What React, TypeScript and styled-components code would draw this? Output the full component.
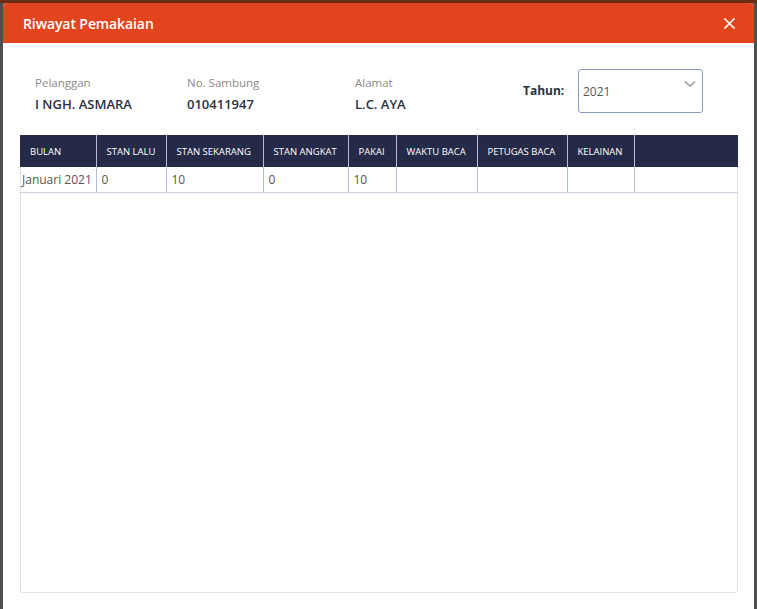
import React from "react";
import styled, { createGlobalStyle } from "styled-components";

const Global = createGlobalStyle`
  html, body { margin: 0; padding: 0; }
  body {
    background: linear-gradient(to bottom, #6b2c18 0, #6b2c18 3px, #4f4f4f 3px);
    font-family: "Open Sans", "Noto Sans", sans-serif;
    height: 609px;
    overflow: hidden;
  }
`;

const Overlay = styled.div`
  padding: 3px 3px 0 3px;
  height: 615px;
  box-sizing: border-box;
`;

const Modal = styled.div`
  background: #ffffff;
  border-radius: 4px 4px 0 0;
  height: 100%;
  display: flex;
  flex-direction: column;
  overflow: hidden;
`;

const Header = styled.div`
  height: 40px;
  background: #e2451e;
  display: flex;
  align-items: center;
  justify-content: space-between;
  padding: 0 17px 0 20px;
  flex-shrink: 0;
`;

const Title = styled.h1`
  margin: 0;
  color: #ffffff;
  font-size: 14px;
  font-weight: 600;
  letter-spacing: -0.1px;
`;

const Close = styled.button`
  background: none;
  border: none;
  padding: 0;
  width: 16px;
  height: 16px;
  display: flex;
  align-items: center;
  justify-content: center;
  cursor: pointer;
`;

const Body = styled.div`
  flex: 1;
  display: flex;
  flex-direction: column;
  padding: 26px 16px 22px 17px;
  min-height: 0;
`;

const InfoRow = styled.div`
  display: flex;
  align-items: flex-start;
  padding-left: 15px;
  height: 44px;
`;

const Field = styled.div<{ $w: number }>`
  width: ${(p) => p.$w}px;
  display: flex;
  flex-direction: column;
  padding-top: 5px;
`;

const Label = styled.span`
  font-size: 11.5px;
  color: #8a8a8a;
  line-height: 17px;
`;

const Value = styled.span`
  font-size: 13px;
  color: #2b3044;
  font-weight: 600;
  line-height: 19px;
  margin-top: 4px;
`;

const YearGroup = styled.div`
  display: flex;
  align-items: flex-start;
`;

const YearLabel = styled.span`
  font-size: 12px;
  font-weight: 700;
  color: #2b3044;
  width: 55px;
  margin-top: 13px;
`;

const Select = styled.div`
  width: 125px;
  height: 44px;
  box-sizing: border-box;
  border: 1px solid #8a9bbd;
  border-radius: 3px;
  position: relative;
  display: flex;
  align-items: center;
  padding-left: 4px;
  font-size: 12px;
  color: #555;
`;

const Chevron = styled.svg`
  position: absolute;
  right: 6px;
  top: 10px;
`;

const TableBox = styled.div`
  margin-top: 22px;
  flex: 1;
  border: 1px solid #e2e2e2;
  border-top: none;
  border-radius: 0 0 3px 3px;
`;

const Table = styled.table`
  width: calc(100% + 2px);
  margin: 0 -1px;
  border-collapse: collapse;
  table-layout: fixed;
`;

const Th = styled.th<{ $w?: number }>`
  ${(p) => (p.$w ? `width: ${p.$w}px;` : "")}
  background: #252a48;
  color: #ffffff;
  font-size: 9.5px;
  font-weight: 400;
  text-align: left;
  height: 32px;
  padding: 0 0 0 10px;
  box-sizing: border-box;
  border-right: 1px solid #b4bfd0;
  white-space: nowrap;
  overflow: hidden;
  &:last-child { border-right: none; }
`;

const Td = styled.td`
  font-size: 12px;
  color: #555;
  height: 25px;
  padding: 0 0 0 5px;
  border-right: 1px solid #b4bfd0;
  border-bottom: 1px solid #c9d1dd;
  white-space: nowrap;
  &:first-child { padding-left: 2px; }
  &:last-child { border-right: none; }
`;

const columns: [string, number | undefined][] = [
  ["BULAN", 76],
  ["STAN LALU", 70],
  ["STAN SEKARANG", 97],
  ["STAN ANGKAT", 85],
  ["PAKAI", 48],
  ["WAKTU BACA", 81],
  ["PETUGAS BACA", 90],
  ["KELAINAN", 67],
  ["", undefined],
];

const rows = [["Januari 2021", "0", "10", "0", "10", "", "", "", ""]];

export default function App() {
  return (
    <>
      <Global />
      <Overlay>
        <Modal>
          <Header>
            <Title>Riwayat Pemakaian</Title>
            <Close aria-label="close">
              <svg width="11" height="11" viewBox="0 0 11 11">
                <path d="M1 1L10 10M10 1L1 10" stroke="#fff" strokeWidth="1.6" strokeLinecap="square" />
              </svg>
            </Close>
          </Header>
          <Body>
            <InfoRow>
              <Field $w={152}>
                <Label>Pelanggan</Label>
                <Value>I NGH. ASMARA</Value>
              </Field>
              <Field $w={168}>
                <Label>No. Sambung</Label>
                <Value>010411947</Value>
              </Field>
              <Field $w={168}>
                <Label>Alamat</Label>
                <Value>L.C. AYA</Value>
              </Field>
              <YearGroup>
                <YearLabel>Tahun:</YearLabel>
                <Select>
                  2021
                  <Chevron width="12" height="8" viewBox="0 0 12 8">
                    <path d="M1 1.5L6 6L11 1.5" fill="none" stroke="#999" strokeWidth="1.5" />
                  </Chevron>
                </Select>
              </YearGroup>
            </InfoRow>
            <TableBox>
              <Table>
                <thead>
                  <tr>
                    {columns.map(([c, w], i) => (
                      <Th key={i} $w={w}>{c}</Th>
                    ))}
                  </tr>
                </thead>
                <tbody>
                  {rows.map((r, i) => (
                    <tr key={i}>
                      {r.map((v, j) => (
                        <Td key={j}>{v}</Td>
                      ))}
                    </tr>
                  ))}
                </tbody>
              </Table>
            </TableBox>
          </Body>
        </Modal>
      </Overlay>
    </>
  );
}
